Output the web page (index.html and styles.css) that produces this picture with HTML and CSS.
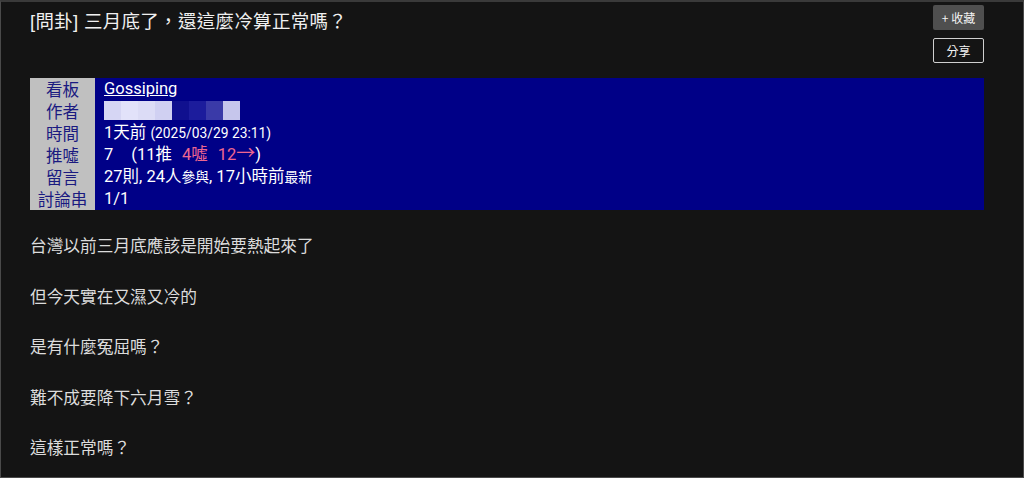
FILE: index.html
```html
<!DOCTYPE html>
<html lang="zh-TW">
<head>
  <meta charset="UTF-8">
  <title>[問卦] 三月底了，還這麼冷算正常嗎？</title>
  <link rel="stylesheet" href="styles.css">
</head>
<body>
  <div class="pagina">
    <div class="topo">
      <h1 class="titulo">[問卦] 三月底了，還這麼冷算正常嗎？</h1>
      <div class="acoes">
        <button class="btn btn-salvar">+ 收藏</button>
        <button class="btn btn-share">分享</button>
      </div>
    </div>

    <table class="meta">
      <tr><th>看板</th><td><a href="#">Gossiping</a></td></tr>
      <tr><th>作者</th><td>
        <span class="mosaico">
          <i style="background:#d6d6f4"></i><i style="background:#e2e2fa"></i><i style="background:#dcdcf6"></i><i style="background:#d0d0f2"></i><i style="background:#10108f"></i><i style="background:#1c1c9c"></i><i style="background:#3a3aa8"></i><i style="background:#c6c6ec"></i>
        </span>
      </td></tr>
      <tr><th>時間</th><td>1天前 <small>(2025/03/29 23:11)</small></td></tr>
      <tr><th>推噓</th><td>7<span class="esp"></span>(11推<span class="esp2"></span><span class="vermelho">4噓<span class="esp2"></span>12<span class="seta">→</span></span>)</td></tr>
      <tr><th>留言</th><td>27則, 24人<small>參與</small>, 17小時前<small>最新</small></td></tr>
      <tr><th>討論串</th><td>1/1</td></tr>
    </table>

    <div class="conteudo">
      <p>台灣以前三月底應該是開始要熱起來了</p>
      <p>但今天實在又濕又冷的</p>
      <p>是有什麼冤屈嗎？</p>
      <p>難不成要降下六月雪？</p>
      <p>這樣正常嗎？</p>
    </div>
  </div>
</body>
</html>
```

FILE: styles.css
```css
html, body {
  margin: 0;
  height: 100%;
}
body {
  background: #141414;
  font-family: "Liberation Sans", "Noto Sans CJK TC", sans-serif;
  color: #e0e0e0;
  box-sizing: border-box;
  border: 1px solid #4a4a4a;
  border-top: 2px solid #3a3a3a;
  overflow: hidden;
}
.pagina {
  padding: 3px 39px 0 29px;
}
.topo {
  display: flex;
  justify-content: space-between;
  align-items: flex-start;
}
.titulo {
  margin: 2px 0 0 0;
  font-size: 18.5px;
  font-weight: normal;
  color: #f0f0f0;
  letter-spacing: 0.3px;
}
.acoes {
  display: flex;
  flex-direction: column;
  gap: 8px;
  width: 51px;
}
.btn {
  font-family: "Noto Sans CJK TC", sans-serif;
  font-size: 12px;
  height: 25px;
  padding: 0;
  color: #f4f4f4;
  cursor: pointer;
}
.btn-salvar {
  background: #4f4f4f;
  border: none;
  border-radius: 2px;
}
.btn-share {
  background: transparent;
  border: 1px solid #cfcfcf;
  border-radius: 2px;
}
.meta {
  width: 100%;
  margin-top: 15px;
  border-collapse: collapse;
  font-size: 16.5px;
  line-height: 22px;
}
.meta th {
  width: 65px;
  height: 22px;
  background: #c0c0c0;
  color: #1a1a80;
  font-weight: normal;
  text-align: center;
  padding: 0;
  font-family: "Noto Sans CJK TC", sans-serif;
  font-size: 16.5px;
}
.meta td {
  height: 22px;
  background: #000087;
  color: #ffffff;
  padding: 0 0 0 9px;
  font-family: "Roboto", "Noto Sans CJK TC", sans-serif;
}
.meta a {
  color: #ffffff;
}
.meta small {
  font-size: 13.8px;
}
.esp {
  display: inline-block;
  width: 18px;
}
.esp2 {
  display: inline-block;
  width: 10px;
}
.seta {
  display: inline-block;
  font-size: 19px;
  line-height: 18px;
}
.vermelho {
  color: #ee6690;
}
.mosaico {
  display: inline-flex;
  vertical-align: middle;
  height: 19px;
  margin-top: -2px;
}
.mosaico i {
  display: block;
  width: 17px;
  height: 19px;
}
.conteudo {
  padding-top: 24px;
  font-size: 16.7px;
  color: #dcdcdc;
  font-family: "Noto Sans CJK TC", sans-serif;
}
.conteudo p {
  margin: 0 0 27.5px 0;
  line-height: 23px;
}
```
